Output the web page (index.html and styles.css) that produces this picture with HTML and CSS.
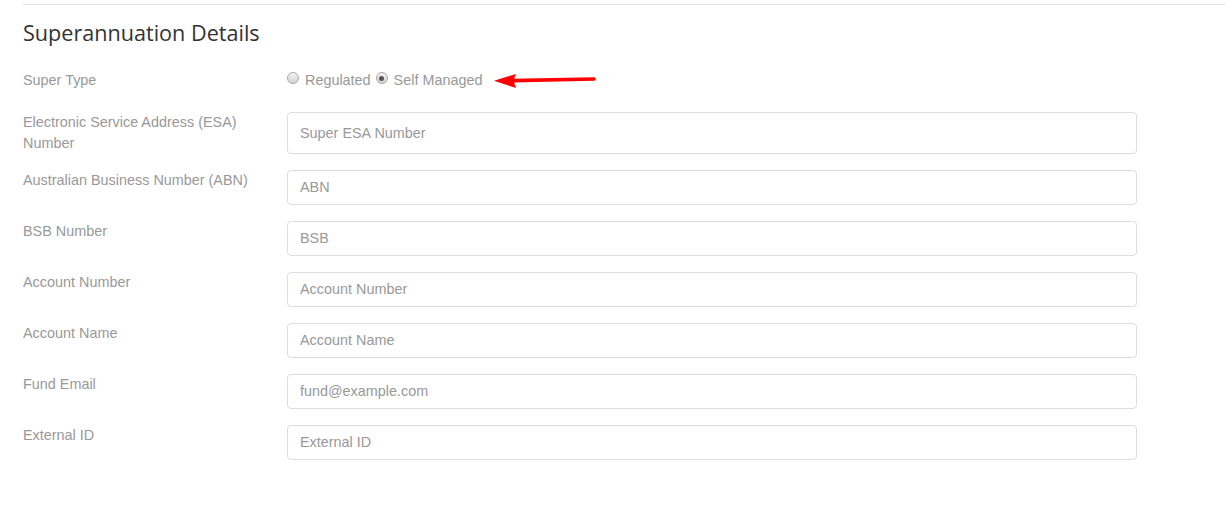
FILE: index.html
```html
<!DOCTYPE html>
<html lang="en">
<head>
    <meta charset="UTF-8">
    <title>Superannuation Details</title>
    <link rel="stylesheet" href="styles.css">
</head>
<body>
    <div class="panel">
        <hr class="divider">
        <h2 class="section-title">Superannuation Details</h2>
        <form class="super-form">
            <div class="form-row radio-row">
                <label class="form-label">Super Type</label>
                <div class="radio-group">
                    <input type="radio" name="superType" id="regulated" class="radio">
                    <label for="regulated" class="radio-label">Regulated</label>
                    <input type="radio" name="superType" id="selfManaged" class="radio" checked>
                    <label for="selfManaged" class="radio-label">Self Managed</label>
                    <svg class="arrow" width="102" height="18" viewBox="0 0 102 18">
                        <path d="M18 8.6 L100 7" stroke="#f00" stroke-width="3.6" stroke-linecap="round" fill="none"/>
                        <path d="M0 8.8 L22 2 Q18 8.6 22 16 Z" fill="#f00"/>
                    </svg>
                </div>
            </div>
            <div class="form-row tall-row">
                <label class="form-label two-line">Electronic Service Address (ESA) Number</label>
                <input type="text" class="form-input tall" placeholder="Super ESA Number">
            </div>
            <div class="form-row">
                <label class="form-label">Australian Business Number (ABN)</label>
                <input type="text" class="form-input" placeholder="ABN">
            </div>
            <div class="form-row">
                <label class="form-label">BSB Number</label>
                <input type="text" class="form-input" placeholder="BSB">
            </div>
            <div class="form-row">
                <label class="form-label">Account Number</label>
                <input type="text" class="form-input" placeholder="Account Number">
            </div>
            <div class="form-row">
                <label class="form-label">Account Name</label>
                <input type="text" class="form-input" placeholder="Account Name">
            </div>
            <div class="form-row">
                <label class="form-label">Fund Email</label>
                <input type="email" class="form-input" placeholder="fund@example.com">
            </div>
            <div class="form-row">
                <label class="form-label">External ID</label>
                <input type="text" class="form-input" placeholder="External ID">
            </div>
        </form>
    </div>
</body>
</html>
```

FILE: styles.css
```css
:root {
    --label-color: #999;
    --title-color: #333;
    --border-color: #ddd;
}

* {
    box-sizing: border-box;
}

body {
    margin: 0;
    background: #fff;
    font-family: 'Liberation Sans', Arial, sans-serif;
    font-size: 14.4px;
    color: var(--label-color);
}

.panel {
    padding: 4px 0 0 23px;
}

.divider {
    margin: 0;
    border: none;
    border-top: 1px solid #e3e3e3;
}

.section-title {
    font-family: 'Open Sans', sans-serif;
    font-weight: 400;
    font-size: 21.6px;
    line-height: 24px;
    color: var(--title-color);
    margin: 16px 0 25px 0;
}

.form-row {
    display: flex;
    align-items: flex-start;
    margin-bottom: 16px;
}

.radio-row {
    height: 26px;
}

.form-label {
    width: 264px;
    flex: none;
    line-height: 21px;
    padding-right: 15px;
}

.radio-group {
    display: flex;
    align-items: center;
    height: 21px;
    margin-top: -1px;
}

.radio {
    appearance: none;
    -webkit-appearance: none;
    width: 12px;
    height: 12px;
    margin: -3px 6px 0 0;
    border-radius: 50%;
    border: 1px solid #a8a8a8;
    background: linear-gradient(#f4f4f4, #d2d2d2);
    position: relative;
}

.radio:checked::after {
    content: "";
    position: absolute;
    left: 2.5px;
    top: 2.5px;
    width: 5px;
    height: 5px;
    border-radius: 50%;
    background: #555;
}

.radio-label {
    margin-right: 5px;
}

.arrow {
    margin: 3px 0 0 7px;
}

.form-input {
    width: 850px;
    height: 35px;
    padding: 0 12px 1px 12px;
    border: 1px solid var(--border-color);
    border-radius: 4px;
    font-family: 'Liberation Sans', Arial, sans-serif;
    font-size: 14.4px;
    color: #555;
    background: #fff;
}

.form-input.tall {
    height: 42px;
}

.form-input::placeholder {
    color: var(--label-color);
}
```
